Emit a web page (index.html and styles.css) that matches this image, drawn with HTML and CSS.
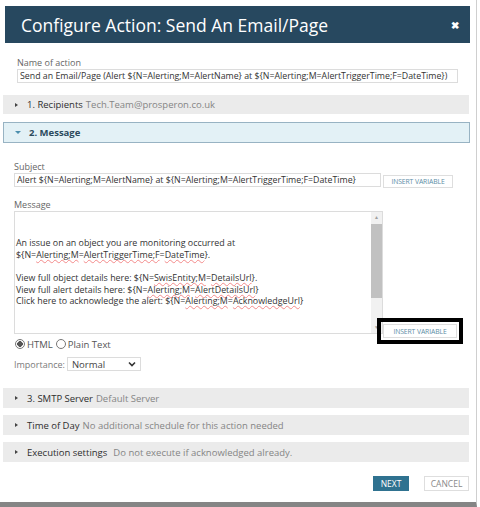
FILE: index.html
```html
<!DOCTYPE html>
<html>
<head>
  <title>Configure Action</title>
  <link rel="stylesheet" href="styles.css">
</head>
<body>
  <div class="dialog">
    <div class="dialog-header">
      <h1>Configure Action: Send An Email/Page</h1>
      <span class="close">&#10006;</span>
    </div>

    <div class="name-block">
      <label class="field-label" for="actionName">Name of action</label>
      <input type="text" id="actionName" class="text-input wide" value="Send an Email/Page (Alert ${N=Alerting;M=AlertName} at ${N=Alerting;M=AlertTriggerTime;F=DateTime})">
    </div>

    <div class="section">
      <span class="arrow"></span>
      <span class="section-title">1. Recipients</span>
      <span class="section-value">Tech.Team@prosperon.co.uk</span>
    </div>

    <div class="section open">
      <span class="arrow down"></span>
      <span class="section-title">2. Message</span>
    </div>

    <div class="message-body">
      <label class="field-label">Subject</label>
      <div class="subject-row">
        <input type="text" class="text-input subject" value="Alert ${N=Alerting;M=AlertName} at ${N=Alerting;M=AlertTriggerTime;F=DateTime}">
        <button class="insert-btn">INSERT VARIABLE</button>
      </div>

      <label class="field-label msg-label">Message</label>
      <div class="message-row">
        <div class="textarea">
          <div class="textarea-text">
            <br>
            <br>
            An issue on an object you are monitoring occurred at<br>
            ${N=<span class="typo">Alerting;M</span>=<span class="typo">AlertTriggerTime;F</span>=<span class="typo">DateTime</span>}.<br>
            <br>
            View full object details here: ${N=<span class="typo">SwisEntity;M</span>=<span class="typo">DetailsUrl</span>}.<br>
            View full alert details here: ${N=<span class="typo">Alerting;M</span>=<span class="typo">AlertDetailsUrl</span>}<br>
            Click here to acknowledge the alert: ${N=<span class="typo">Alerting;M</span>=<span class="typo">AcknowledgeUrl</span>}
          </div>
          <div class="scrollbar">
            <span class="scroll-arrow">&#9650;</span>
            <div class="scroll-track"><div class="scroll-thumb"></div></div>
            <span class="scroll-arrow">&#9660;</span>
          </div>
        </div>
        <button class="insert-btn marked">INSERT VARIABLE</button>
      </div>

      <div class="format-row">
        <span class="radio checked"></span><span class="radio-label">HTML</span>
        <span class="radio"></span><span class="radio-label">Plain Text</span>
      </div>

      <div class="importance-row">
        <span class="importance-label">Importance:</span>
        <div class="select">
          <span>Normal</span>
          <svg width="8" height="6" viewBox="0 0 8 6"><path d="M1 1.5 L4 4.5 L7 1.5" fill="none" stroke="#333" stroke-width="1.6"/></svg>
        </div>
      </div>
    </div>

    <div class="section spaced">
      <span class="arrow"></span>
      <span class="section-title">3. SMTP Server</span>
      <span class="section-value">Default Server</span>
    </div>
    <div class="section">
      <span class="arrow"></span>
      <span class="section-title">Time of Day</span>
      <span class="section-value">No additional schedule for this action needed</span>
    </div>
    <div class="section">
      <span class="arrow"></span>
      <span class="section-title">Execution settings</span>
      <span class="section-value wide-gap">Do not execute if acknowledged already.</span>
    </div>

    <div class="dialog-footer">
      <button class="btn primary">NEXT</button>
      <button class="btn">CANCEL</button>
    </div>
  </div>
</body>
</html>
```

FILE: styles.css
```css
body {
  margin: 0;
  background: #fff;
  font-family: 'Open Sans', sans-serif;
  color: #333;
}
.dialog {
  box-sizing: border-box;
  width: 477px;
  height: 507px;
  border-right: 1px solid #cfcfcf;
  border-bottom: 5px solid #858585;
  padding-top: 6px;
}
.dialog-header {
  display: flex;
  align-items: center;
  justify-content: space-between;
  height: 37px;
  margin: 0 6px 0 5px;
  padding: 0 11px 0 16px;
  background-color: #27485f;
}
.dialog-header h1 {
  margin: 0;
  font-size: 17.5px;
  font-weight: 400;
  color: #fff;
}
.close {
  color: #fff;
  font-size: 10px;
  font-weight: 700;
}
.field-label {
  display: block;
  font-size: 9px;
  line-height: 12px;
  color: #666;
}
.text-input {
  display: block;
  box-sizing: border-box;
  height: 14px;
  margin: 0;
  padding: 0 2px;
  border: 1px solid #dcdcdc;
  font-family: 'Open Sans', sans-serif;
  font-size: 8.8px;
  color: #333;
  outline: none;
}
.name-block {
  margin-top: 14px;
  padding-left: 17px;
}
.text-input.wide {
  width: 441px;
}
.section {
  display: flex;
  align-items: center;
  box-sizing: border-box;
  height: 19px;
  margin: 12px 7px 0 3px;
  padding-left: 12px;
  background-color: #ebebeb;
  font-size: 9.5px;
}
.section + .section {
  margin-top: 7px;
  height: 20px;
}
.section.open {
  margin-top: 8px;
  margin-right: 6px;
  height: 21px;
  border: 1px solid #98b3c3;
  padding-left: 11px;
  background-color: #e3f1f6;
}
.section.spaced {
  margin-top: 17px;
  height: 20px;
}
.arrow {
  width: 0;
  height: 0;
  margin-right: 9px;
  border-left: 3px solid #444;
  border-top: 2.5px solid transparent;
  border-bottom: 2.5px solid transparent;
}
.arrow.down {
  margin-right: 8px;
  border-left: 3px solid transparent;
  border-right: 3px solid transparent;
  border-top: 3px solid #4d8fae;
  border-bottom: 0;
}
.section-title {
  color: #2e2e2e;
}
.section.open .section-title {
  font-weight: 700;
  color: #2b4a5d;
}
.section-value {
  margin-left: 3px;
  color: #858585;
}
.section-value.wide-gap {
  margin-left: 6px;
}
.message-body {
  padding-left: 14px;
  padding-top: 18px;
}
.subject-row {
  display: flex;
  align-items: flex-start;
}
.text-input.subject {
  width: 367px;
}
.insert-btn {
  box-sizing: border-box;
  height: 13px;
  margin: 2px 0 0 2px;
  padding: 0;
  width: 70px;
  border: 1px solid #dedede;
  background: #fff;
  font-family: 'Open Sans', sans-serif;
  font-size: 6.8px;
  letter-spacing: -0.1px;
  color: #5d8ea6;
}
.msg-label {
  margin-top: 11px;
}
.message-row {
  display: flex;
  align-items: flex-end;
}
.textarea {
  display: flex;
  box-sizing: border-box;
  width: 369px;
  height: 123px;
  border: 1px solid #dcdcdc;
}
.textarea-text {
  flex: 1;
  padding: 2px 0 0 1px;
  font-size: 8.9px;
  line-height: 11.6px;
  color: #333;
}
.typo {
  text-decoration: underline wavy #f38a8a;
  text-decoration-thickness: 1px;
  text-decoration-skip-ink: none;
}
.scrollbar {
  display: flex;
  flex-direction: column;
  align-items: center;
  width: 11px;
  background-color: #f1f1f1;
}
.scroll-arrow {
  height: 11px;
  font-size: 5px;
  line-height: 11px;
  color: #a0a0a0;
}
.scroll-track {
  flex: 1;
  width: 100%;
}
.scroll-thumb {
  height: 74px;
  margin-top: 1px;
  background-color: #c1c1c1;
}
.insert-btn.marked {
  width: 74px;
  height: 14px;
  margin: 0 0 -4px 0;
  outline: 4px solid #000;
  outline-offset: 2px;
}
.format-row {
  display: flex;
  align-items: center;
  margin-top: 4px;
  height: 12px;
  font-size: 9.5px;
  color: #555;
}
.radio {
  box-sizing: border-box;
  width: 10px;
  height: 10px;
  margin-right: 2px;
  border: 1px solid #777;
  border-radius: 50%;
  background: #fff;
}
.radio.checked {
  margin-left: 1px;
  background: radial-gradient(circle, #555 0 2.6px, #fff 3px);
}
.radio-label {
  margin-right: 3px;
}
.importance-row {
  display: flex;
  align-items: center;
  gap: 2px;
  margin-top: 7px;
  font-size: 9.5px;
}
.importance-label {
  font-size: 9px;
  color: #7a7a7a;
}
.select {
  display: flex;
  align-items: center;
  justify-content: space-between;
  box-sizing: border-box;
  width: 74px;
  height: 14px;
  padding: 0 4px 0 4px;
  border: 1px solid #dcdcdc;
  color: #444;
}
.dialog-footer {
  display: flex;
  justify-content: flex-end;
  gap: 15px;
  margin-top: 14px;
  padding-right: 7px;
}
.btn {
  box-sizing: border-box;
  height: 15px;
  width: 45px;
  padding: 0;
  border: 1px solid #dedede;
  background: #fff;
  font-family: 'Open Sans', sans-serif;
  font-size: 8.5px;
  color: #8a8a8a;
}
.btn.primary {
  width: 36px;
  border-color: #2f7290;
  background-color: #2f7290;
  color: #fff;
}
```
